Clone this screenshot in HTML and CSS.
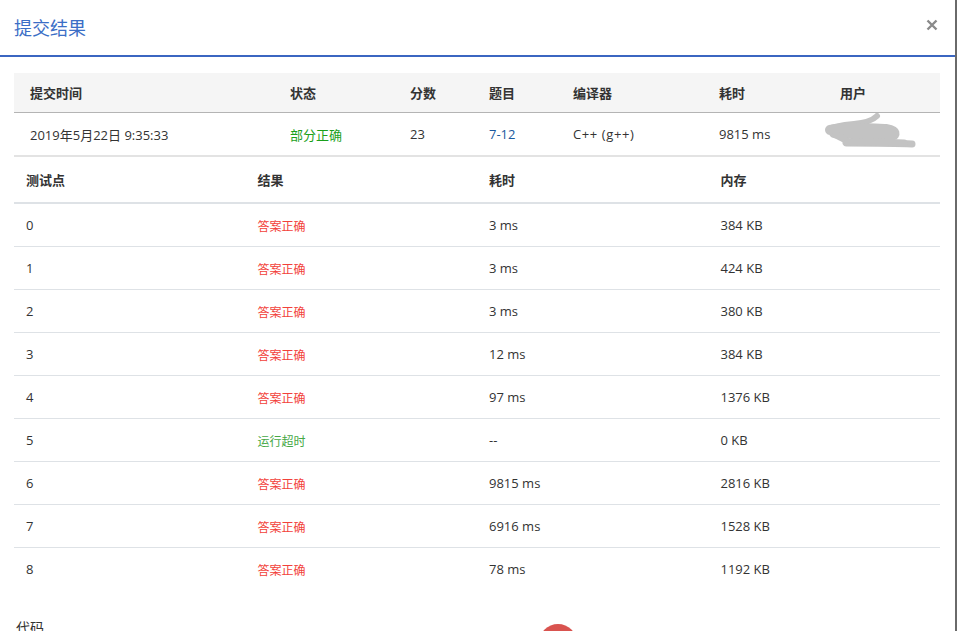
FILE: index.html
```html
<!DOCTYPE html>
<html lang="zh">
<head>
<meta charset="utf-8">
<title>提交结果</title>
<link rel="stylesheet" href="styles.css">
</head>
<body>
<div class="modal">
  <div class="modal-header">
    <h2 class="modal-title">提交结果</h2>
    <button class="close" aria-label="close">
      <svg width="12" height="12" viewBox="0 0 12 12"><path d="M1.5 1.5 L10.5 10.5 M10.5 1.5 L1.5 10.5" stroke="#8a8a8a" stroke-width="2.4" stroke-linecap="butt"/></svg>
    </button>
  </div>
  <div class="modal-body">
    <div class="summary">
      <div class="s-row s-head">
        <div>提交时间</div><div>状态</div><div>分数</div><div>题目</div><div>编译器</div><div>耗时</div><div>用户</div>
      </div>
      <div class="s-row s-data">
        <div>2019年5月22日 9:35:33</div>
        <div class="partial">部分正确</div>
        <div>23</div>
        <div><a class="link" href="#">7-12</a></div>
        <div class="compiler">C++ (g++)</div>
        <div>9815 ms</div>
        <div class="user">
          <svg width="96" height="40" viewBox="0 0 96 40">
            <g fill="none" stroke="#c3c3c3" stroke-linecap="round" stroke-linejoin="round">
              <path d="M53 3 C48 8 40 10 30 11 C20 12 10 13 5 16" stroke-width="6"/>
              <path d="M6 17 C20 14 40 15 62 16 C68 17 72 19 70 22 C55 23 30 21 10 20" stroke-width="10"/>
              <path d="M12 22 C20 26 26 28 22 30 C40 30 70 30 88 31" stroke-width="7"/>
              <path d="M24 29 C40 28 60 29 80 30" stroke-width="7"/>
            </g>
          </svg>
        </div>
      </div>
    </div>
    <div class="cases">
      <div class="c-row c-head"><div>测试点</div><div>结果</div><div>耗时</div><div>内存</div></div>
      <div class="c-row"><div>0</div><div class="ac">答案正确</div><div>3 ms</div><div>384 KB</div></div>
      <div class="c-row"><div>1</div><div class="ac">答案正确</div><div>3 ms</div><div>424 KB</div></div>
      <div class="c-row"><div>2</div><div class="ac">答案正确</div><div>3 ms</div><div>380 KB</div></div>
      <div class="c-row"><div>3</div><div class="ac">答案正确</div><div>12 ms</div><div>384 KB</div></div>
      <div class="c-row"><div>4</div><div class="ac">答案正确</div><div>97 ms</div><div>1376 KB</div></div>
      <div class="c-row"><div>5</div><div class="tle">运行超时</div><div>--</div><div>0 KB</div></div>
      <div class="c-row"><div>6</div><div class="ac">答案正确</div><div>9815 ms</div><div>2816 KB</div></div>
      <div class="c-row"><div>7</div><div class="ac">答案正确</div><div>6916 ms</div><div>1528 KB</div></div>
      <div class="c-row last"><div>8</div><div class="ac">答案正确</div><div>78 ms</div><div>1192 KB</div></div>
    </div>
    <div class="code-section">
      <div class="code-label">代码</div>
      <div class="badge-dot"></div>
    </div>
  </div>
</div>
</body>
</html>
```

FILE: styles.css
```css
html, body {
  margin: 0;
  padding: 0;
  background: #fff;
  overflow: hidden;
}
body {
  font-family: "Open Sans", "Noto Sans CJK SC", sans-serif;
  font-size: 13px;
  color: #333;
}
.modal {
  width: 955px;
  height: 631px;
  border-right: 2px solid #6a6a6a;
  overflow: hidden;
}
.modal-header {
  height: 55px;
  border-bottom: 2px solid #3b66c1;
  display: flex;
  align-items: center;
  justify-content: space-between;
  padding: 0 17px 0 14px;
}
.modal-title {
  margin: 0;
  font-family: "Noto Sans CJK SC", sans-serif;
  font-weight: 400;
  font-size: 18px;
  color: #3b6ec6;
  position: relative;
  top: -1px;
}
.close {
  border: 0;
  background: none;
  padding: 0;
  width: 12px;
  height: 12px;
  display: flex;
  cursor: pointer;
  position: relative;
  top: -3px;
}
.modal-body {
  padding: 16px 15px 0 14px;
}
.summary {
  width: 926px;
}
.s-row {
  display: grid;
  grid-template-columns: 260px 120px 79px 84px 146px 121px 116px;
  align-items: center;
}
.s-row > div {
  padding-left: 16px;
  white-space: nowrap;
}
.s-head {
  height: 39px;
  background: #f5f5f5;
  border-bottom: 1px solid #b4b4b4;
  font-weight: 700;
  font-family: "Noto Sans CJK SC", sans-serif;
}
.s-data {
  height: 42px;
  border-bottom: 2px solid #e3e3e3;
}
.compiler {
  letter-spacing: 0.6px;
}
.partial {
  color: #1aa01a;
  font-family: "Noto Sans CJK SC", sans-serif;
}
.link {
  color: #1b5a9e;
  text-decoration: none;
}
.user {
  height: 42px;
  position: relative;
}
.user svg {
  position: absolute;
  left: 0;
  top: 0;
}
.cases {
  width: 926px;
}
.c-row {
  display: grid;
  grid-template-columns: repeat(4, 1fr);
  align-items: center;
  height: 42px;
  border-bottom: 1px solid #dee2e6;
}
.c-row > div {
  padding-left: 12px;
}
.c-row.last {
  border-bottom: 0;
}
.c-head {
  height: 45px;
  border-bottom: 2px solid #dee2e6;
  font-weight: 700;
  font-family: "Noto Sans CJK SC", sans-serif;
}
.ac, .tle {
  font-size: 12px;
  font-family: "Noto Sans CJK SC", sans-serif;
}
.ac { color: #f2413a; }
.tle { color: #45a845; }
.code-section {
  position: relative;
  margin-top: 27px;
  height: 40px;
}
.code-label {
  margin-left: 2px;
  font-family: "Noto Sans CJK SC", sans-serif;
  font-size: 14px;
  color: #333;
}
.badge-dot {
  position: absolute;
  left: 525px;
  top: 7px;
  width: 38px;
  height: 38px;
  border-radius: 50%;
  background: #d9534f;
}
```
